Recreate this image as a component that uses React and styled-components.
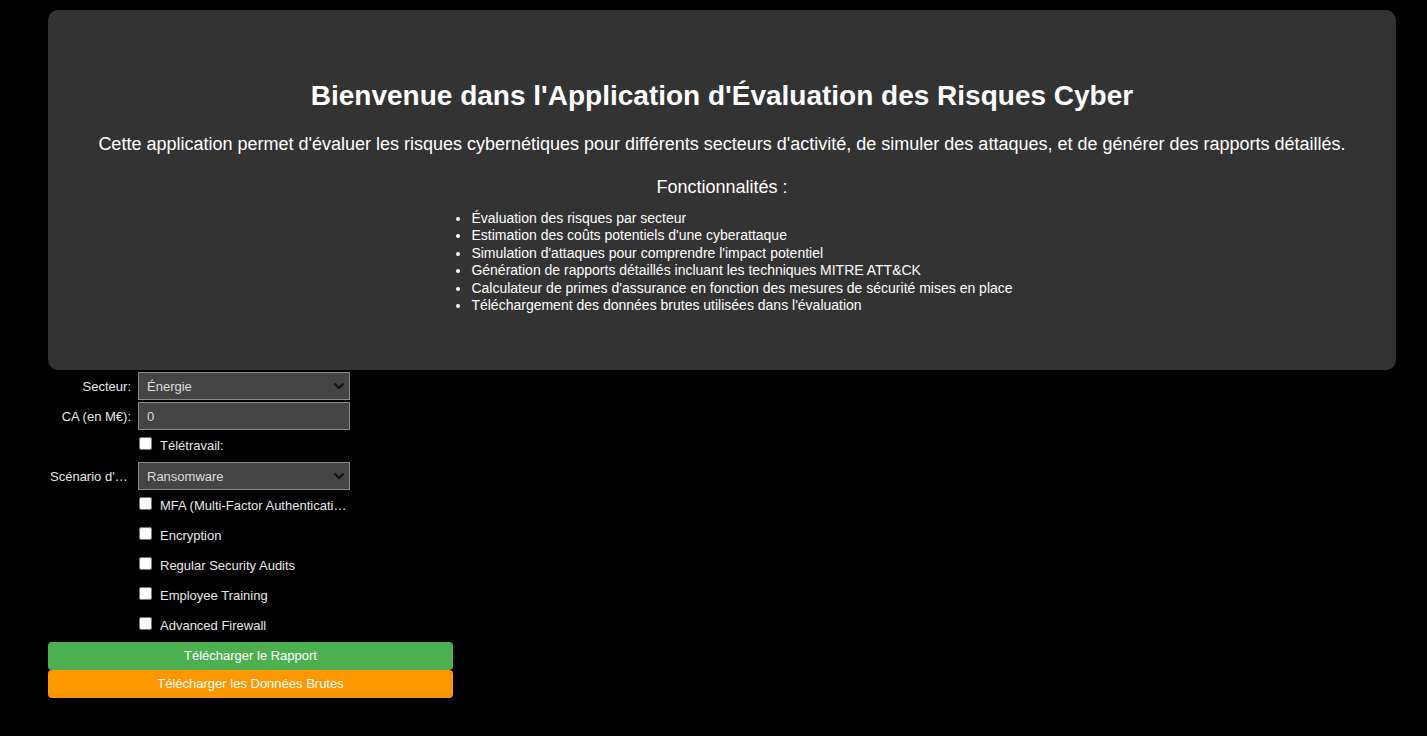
import React from "react";
import styled, { createGlobalStyle } from "styled-components";

const Global = createGlobalStyle`
  html, body { margin: 0; padding: 0; background: #000; }
  body { font-family: "Liberation Sans", Arial, sans-serif; color: #fff; }
`;

const Page = styled.div`
  padding: 10px 31px 0 48px;
  min-height: 726px;
  background: #000;
`;

const Hero = styled.section`
  background: #333333;
  border-radius: 10px;
  height: 360px;
  box-sizing: border-box;
  padding: 70px 20px 0;
  display: flex;
  flex-direction: column;
  align-items: center;
  text-align: center;
`;

const Title = styled.h1`
  margin: 0;
  font-size: 28px;
  font-weight: bold;
  line-height: 32px;
  color: #fff;
`;

const Lead = styled.p`
  margin: 22px 0 0;
  font-size: 18px;
  line-height: 21px;
  color: #fff;
`;

const SubTitle = styled.h3`
  margin: 22px 0 0;
  font-size: 18px;
  font-weight: normal;
  line-height: 21px;
  color: #fff;
`;

const Features = styled.ul`
  margin: 12px 0 0;
  padding-left: 40px;
  text-align: left;
  font-size: 14px;
  line-height: 17.4px;
  color: #fff;
`;

const Form = styled.form`
  width: 405px;
  margin-top: 2px;
  display: flex;
  flex-direction: column;
  gap: 2px;
`;

const Row = styled.div`
  display: grid;
  grid-template-columns: 84px 212px;
  column-gap: 6px;
  align-items: center;
  height: 28px;
`;

const Label = styled.label`
  font-size: 13px;
  color: #e8e8e8;
  text-align: right;
  white-space: nowrap;
  overflow: hidden;
  text-overflow: ellipsis;
  padding: 0 1px 0 2px;
`;

const fieldCss = `
  box-sizing: border-box;
  width: 212px;
  height: 28px;
  background: #444;
  border: 1px solid #8a8a8a;
  color: #ddd;
  font-family: "Liberation Sans", Arial, sans-serif;
  font-size: 13px;
  padding: 0 8px;
  outline: none;
`;

const SelectWrap = styled.div`
  position: relative;
  width: 212px;
  height: 28px;
`;

const Select = styled.select`
  ${fieldCss}
  appearance: none;
  border-radius: 0;
`;

const Chevron = styled.svg`
  position: absolute;
  right: 5px;
  top: 10px;
  pointer-events: none;
`;

const Input = styled.input`
  ${fieldCss}
`;

const CheckLine = styled.label`
  grid-column: 2;
  display: flex;
  align-items: center;
  gap: 8px;
  font-size: 13px;
  color: #e8e8e8;
  white-space: nowrap;
  overflow: hidden;
  width: 212px;
  padding-bottom: 2px;
`;

const Check = styled.input`
  margin: 0 0 3px 1px;
  width: 13px;
  height: 13px;
  flex: none;
`;

const CheckText = styled.span`
  overflow: hidden;
  text-overflow: ellipsis;
  white-space: nowrap;
`;

const Button = styled.button`
  width: 405px;
  height: 28px;
  border: none;
  border-radius: 4px;
  background: ${(p) => p.$bg};
  color: #fff;
  font-family: "Liberation Sans", Arial, sans-serif;
  font-size: 13px;
  padding: 0 0 2px;
  cursor: pointer;
`;

const Buttons = styled.div`
  display: flex;
  flex-direction: column;
`;

function Dropdown({ value, options }) {
  return (
    <SelectWrap>
      <Select defaultValue={value}>
        {options.map((o) => (
          <option key={o}>{o}</option>
        ))}
      </Select>
      <Chevron width="12" height="8" viewBox="0 0 12 8">
        <path d="M1.5 1.5 L6 6 L10.5 1.5" fill="none" stroke="#111" strokeWidth="2.2" />
      </Chevron>
    </SelectWrap>
  );
}

const features = [
  "Évaluation des risques par secteur",
  "Estimation des coûts potentiels d'une cyberattaque",
  "Simulation d'attaques pour comprendre l'impact potentiel",
  "Génération de rapports détaillés incluant les techniques MITRE ATT&CK",
  "Calculateur de primes d'assurance en fonction des mesures de sécurité mises en place",
  "Téléchargement des données brutes utilisées dans l'évaluation",
];

const measures = [
  "MFA (Multi-Factor Authentication)",
  "Encryption",
  "Regular Security Audits",
  "Employee Training",
  "Advanced Firewall",
];

export default function App() {
  return (
    <>
      <Global />
      <Page>
        <Hero>
          <Title>Bienvenue dans l'Application d'Évaluation des Risques Cyber</Title>
          <Lead>
            Cette application permet d'évaluer les risques cybernétiques pour différents secteurs d'activité, de simuler des attaques, et de générer des rapports détaillés.
          </Lead>
          <SubTitle>Fonctionnalités :</SubTitle>
          <Features>
            {features.map((f) => (
              <li key={f}>{f}</li>
            ))}
          </Features>
        </Hero>
        <Form onSubmit={(e) => e.preventDefault()}>
          <Row>
            <Label>Secteur:</Label>
            <Dropdown value="Énergie" options={["Énergie", "Finance", "Santé", "Industrie"]} />
          </Row>
          <Row>
            <Label>CA (en M€):</Label>
            <Input type="number" defaultValue="0" />
          </Row>
          <Row>
            <CheckLine>
              <Check type="checkbox" />
              <CheckText>Télétravail:</CheckText>
            </CheckLine>
          </Row>
          <Row>
            <Label>Scénario d'attaque:</Label>
            <Dropdown value="Ransomware" options={["Ransomware", "Phishing", "DDoS"]} />
          </Row>
          {measures.map((m) => (
            <Row key={m}>
              <CheckLine>
                <Check type="checkbox" />
                <CheckText>{m}</CheckText>
              </CheckLine>
            </Row>
          ))}
          <Buttons>
            <Button type="button" $bg="#4CAF50">Télécharger le Rapport</Button>
            <Button type="button" $bg="#FF9800">Télécharger les Données Brutes</Button>
          </Buttons>
        </Form>
      </Page>
    </>
  );
}
